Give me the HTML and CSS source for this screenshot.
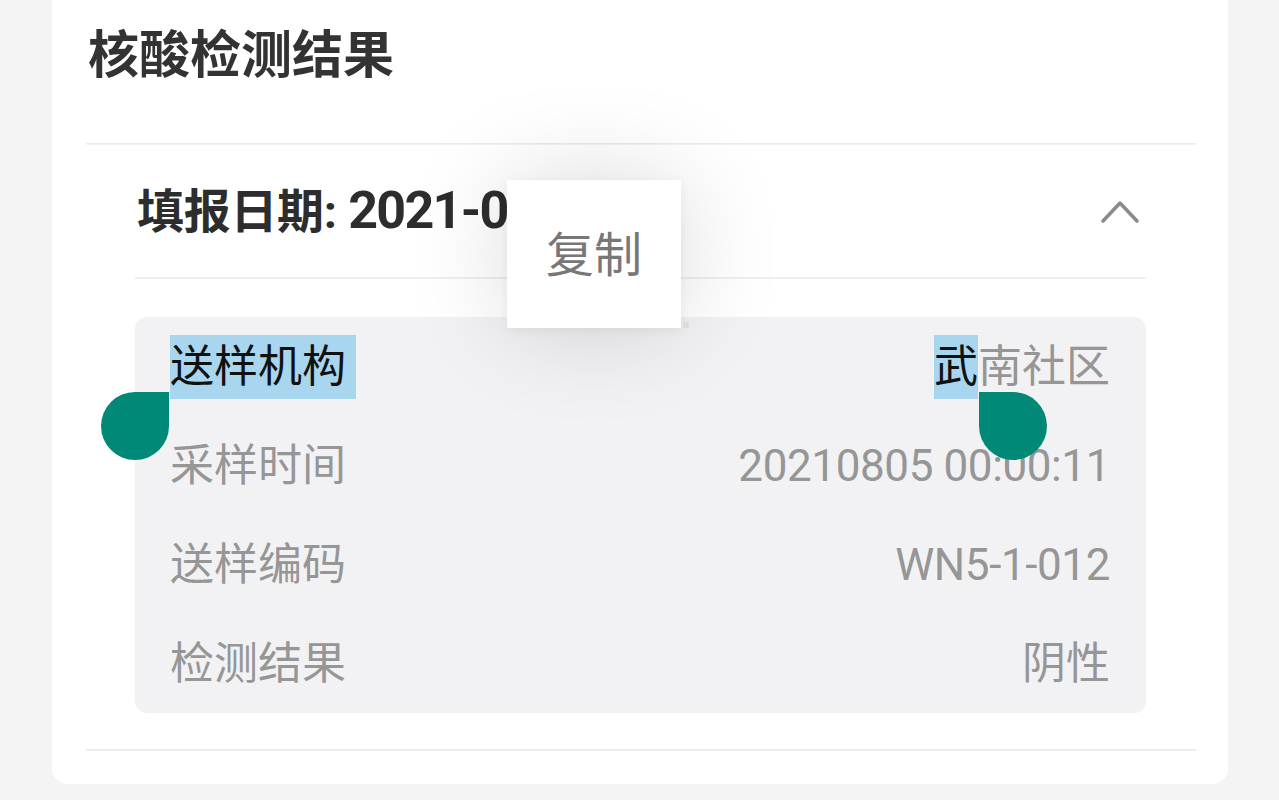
FILE: index.html
```html
<!DOCTYPE html>
<html lang="zh-CN">
<head>
<meta charset="utf-8">
<link rel="stylesheet" href="styles.css">
</head>
<body>
<div class="page">
  <div class="card">
    <h1 class="title">核酸检测结果</h1>
    <div class="divider"></div>
    <div class="section">
      <div class="sec-head">
        <span class="sec-title">填报日期: <span class="sec-num">2021-0</span></span>
        <svg class="chev" width="40" height="28" viewBox="0 0 40 28">
          <polyline points="3,24 20,6 37,24" fill="none" stroke="#8a8a8a" stroke-width="3.5" stroke-linecap="round" stroke-linejoin="round"/>
        </svg>
      </div>
      <div class="sec-divider"></div>
      <div class="info">
        <div class="row">
          <span class="label sel sel-first">送样机构</span>
          <span class="value"><span class="sel">武</span>南社区</span>
        </div>
        <div class="row">
          <span class="label">采样时间</span>
          <span class="value num">20210805 00:00:11</span>
        </div>
        <div class="row">
          <span class="label">送样编码</span>
          <span class="value num">WN5-1-012</span>
        </div>
        <div class="row">
          <span class="label">检测结果</span>
          <span class="value">阴性</span>
        </div>
        <div class="handle handle-left"></div>
        <div class="handle handle-right"></div>
      </div>
    </div>
    <div class="divider bottom-divider"></div>
  </div>
  <div class="popup"><span>复制</span></div>
  <div class="dot"></div>
</div>
</body>
</html>
```

FILE: styles.css
```css
html, body {
  margin: 0;
  padding: 0;
}
body {
  background: #f4f4f4;
  font-family: "Roboto", "Noto Sans CJK SC", sans-serif;
  width: 1279px;
  height: 800px;
  overflow: hidden;
}
.page {
  position: relative;
  padding: 0 51px 17px 52px;
}
.card {
  background: #ffffff;
  border-radius: 0 0 16px 16px;
  padding: 0 32px 33px 34px;
}
.title {
  margin: 0;
  height: 143px;
  box-sizing: border-box;
  padding: 26px 0 0 2px;
  font-size: 51px;
  line-height: 60px;
  font-weight: 700;
  color: #333333;
}
.divider {
  height: 1px;
  background: #ebebeb;
  border-bottom: 1px solid #f3f3f3;
}
.section {
  padding: 0 50px 36px 49px;
}
.sec-head {
  height: 132px;
  display: flex;
  align-items: center;
  justify-content: space-between;
  padding-left: 2px;
}
.sec-title {
  font-size: 47px;
  font-weight: 700;
  color: #2d2d2d;
  line-height: 60px;
  letter-spacing: -0.3px;
}
.sec-num {
  font-size: 52px;
  letter-spacing: -1.7px;
}
.chev {
  margin-right: 6px;
}
.sec-divider {
  height: 2px;
  background: #efefef;
  margin-bottom: 38px;
}
.info {
  position: relative;
  background: #f2f2f4;
  border-radius: 12px;
  padding: 0 36px 0 35px;
}
.row {
  height: 99px;
  display: flex;
  align-items: center;
  justify-content: space-between;
  font-size: 44px;
  color: #969696;
}
.label, .value {
  line-height: 64px;
}
.num {
  letter-spacing: -0.4px;
}
.sel {
  display: inline-block;
  background: #a8d6ee;
  color: #111111;
  line-height: 64px;
}
.sel-first {
  padding-right: 10px;
}
.handle {
  position: absolute;
  width: 68px;
  height: 68px;
  background: #008977;
  top: 75px;
}
.handle-left {
  left: -34px;
  border-radius: 50% 0 50% 50%;
}
.handle-right {
  left: 844px;
  border-radius: 0 50% 50% 50%;
}
.bottom-divider {
  background: #ececec;
  height: 2px;
  border: 0;
}
.popup {
  position: absolute;
  left: 507px;
  top: 180px;
  width: 174px;
  height: 148px;
  background: #ffffff;
  display: flex;
  align-items: center;
  justify-content: center;
  box-shadow: 0 0 100px rgba(0, 0, 0, 0.15), 0 2px 10px rgba(0, 0, 0, 0.05);
}
.popup span {
  font-size: 48px;
  color: #777777;
  line-height: 60px;
  margin-top: 4px;
}
.dot {
  position: absolute;
  left: 683px;
  top: 322px;
  width: 6px;
  height: 6px;
  background: #dcdcdc;
}
```
